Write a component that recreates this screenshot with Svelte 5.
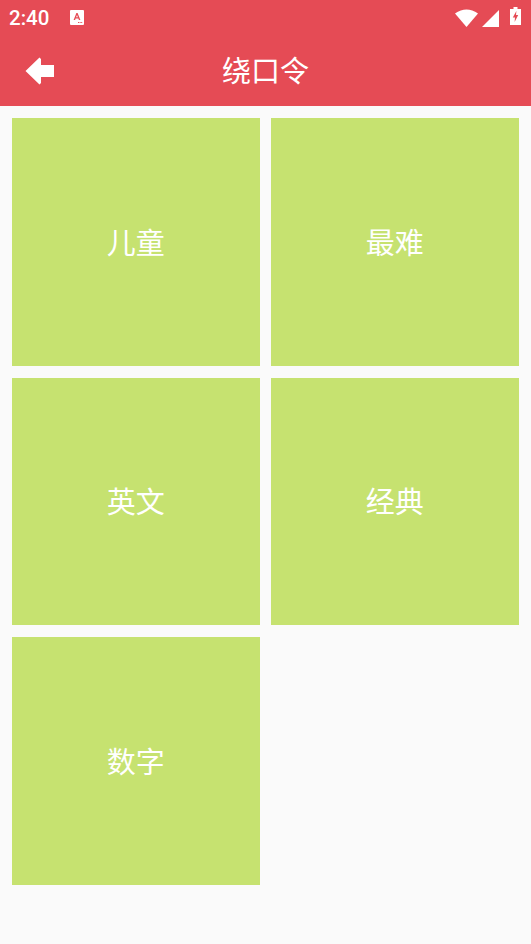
<script>
  const categories = ["儿童", "最难", "英文", "经典", "数字"];
</script>

<div class="page">
  <header class="appbar">
    <div class="status">
      <span class="time">2:40</span>
      <svg class="notice" width="14" height="15" viewBox="0 0 14 15">
        <rect x="0" y="0" width="14" height="15" rx="1" fill="#fff" />
        <path d="M3.6 10 L6.4 3 H7.6 L10.4 10 H8.9 L8.4 8.6 H5.6 L5.1 10 Z M6.1 7.3 H7.9 L7 4.9 Z" fill="#e54b55" fill-rule="evenodd" />
        <path d="M8 12 h1 v1 h-1 z M9.6 12 h1 v1 h-1 z M11.2 12 h1 v1 h-1 z" fill="#e54b55" />
      </svg>
      <span class="spacer"></span>
      <svg class="wifi" width="23" height="18" viewBox="0 0 23 18">
        <path d="M0 4.5 Q11.5 -3.5 23 4.5 L11.5 18 Z" fill="#fff" />
      </svg>
      <svg class="signal" width="18" height="17" viewBox="0 0 18 17">
        <path d="M0 17 L17 0 V17 Z" fill="#fff" />
      </svg>
      <svg class="battery" width="11" height="18" viewBox="0 0 11 18">
        <path d="M3.5 0 H7.5 V2 H11 V18 H0 V2 H3.5 Z" fill="#fff" />
        <path d="M6.4 4 L2.8 10.4 H5 L4.6 15 L8.2 8 H6 Z" fill="#e54b55" />
      </svg>
    </div>
    <div class="toolbar">
      <svg class="back" width="30" height="30" viewBox="0 0 30 30">
        <path d="M0.5 15 L14.5 1.5 L16 3 V9 H29 V21 H16 V27 L14.5 28.5 Z" fill="#fff" />
      </svg>
      <h1>绕口令</h1>
    </div>
  </header>

  <main class="grid">
    {#each categories as name}
      <div class="tile"><span class="label">{name}</span></div>
    {/each}
  </main>
</div>

<style>
  :global(body) {
    margin: 0;
    background: #fafafa;
  }

  .page {
    height: 944px;
    overflow: hidden;
    background: #fafafa;
    font-family: "Roboto", "Noto Sans CJK SC", sans-serif;
  }

  .appbar {
    height: 106px;
    background: #e54b55;
    color: #fff;
  }

  .status {
    height: 36px;
    display: flex;
    align-items: center;
    padding: 0 10px 0 9px;
    box-sizing: border-box;
  }

  .time {
    font-size: 20.5px;
    font-weight: 500;
    width: 61px;
  }

  .notice {
    margin-bottom: 1px;
  }

  .spacer {
    flex: 1;
  }

  .wifi {
    margin-bottom: 1px;
  }

  .signal {
    margin-left: 4px;
  }

  .battery {
    margin-left: 10px;
    margin-bottom: 4px;
  }

  .toolbar {
    height: 70px;
    display: flex;
    align-items: center;
    padding-left: 25px;
  }

  .back {
    flex: none;
  }

  h1 {
    margin: 0 0 0 167px;
    padding-top: 2px;
    font-size: 29px;
    font-weight: 400;
    line-height: 68px;
  }

  .grid {
    display: grid;
    grid-template-columns: 247.5px 247.5px;
    grid-auto-rows: 247.5px;
    gap: 12px 11.5px;
    padding: 12px;
  }

  .tile {
    display: flex;
    align-items: center;
    justify-content: center;
    background: #c6e270;
    color: #fff;
    font-size: 29px;
  }

  .label {
    margin-bottom: 2px;
  }
</style>
